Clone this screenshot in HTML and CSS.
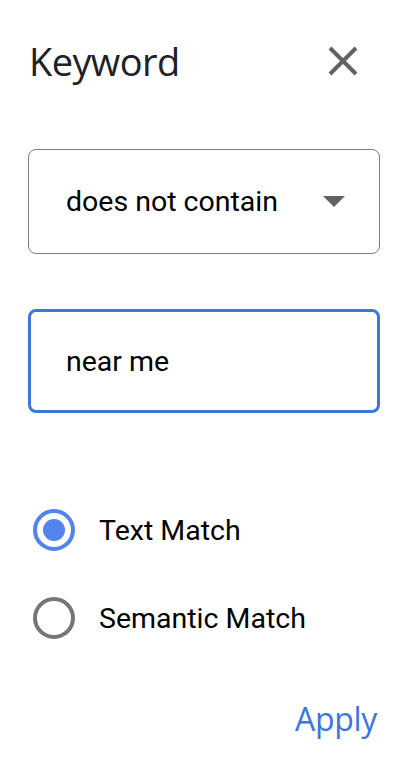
FILE: index.html
```html
<!DOCTYPE html>
<html>
<head>
<meta charset="utf-8">
<link rel="stylesheet" href="styles.css">
</head>
<body>
<div class="panel">
  <div class="header">
    <h1 class="title">Keyword</h1>
    <button class="close" aria-label="Close">
      <svg width="30" height="30" viewBox="0 0 30 30"><path d="M2 2L28 28M28 2L2 28" stroke="#5f6368" stroke-width="4" stroke-linecap="butt" fill="none"/></svg>
    </button>
  </div>
  <div class="select">
    <span class="select-text">does not contain</span>
    <svg class="caret" width="22" height="11" viewBox="0 0 22 11"><path d="M0 0H22L11 11Z" fill="#5f6368"/></svg>
  </div>
  <div class="input">near me</div>
  <div class="radios">
    <label class="radio">
      <span class="dot checked"></span>
      <span class="label">Text Match</span>
    </label>
    <label class="radio">
      <span class="dot"></span>
      <span class="label">Semantic Match</span>
    </label>
  </div>
  <div class="actions">
    <span class="apply">Apply</span>
  </div>
</div>
</body>
</html>
```
FILE: styles.css
```css
html, body {
  margin: 0;
  padding: 0;
  background: #fff;
}
.panel {
  width: 408px;
  box-sizing: border-box;
  padding: 36px 28px 0 28px;
  font-family: Roboto, "Liberation Sans", sans-serif;
  color: #000;
}
.header {
  display: flex;
  align-items: center;
  justify-content: space-between;
  height: 50px;
}
.title {
  margin: 0 0 0 1px;
  font-family: "Open Sans", sans-serif;
  font-weight: 400;
  font-size: 38px;
  line-height: 50px;
  color: #202124;
  letter-spacing: -0.6px;
}
.close {
  border: 0;
  background: none;
  padding: 0;
  margin-right: 22px;
  width: 30px;
  height: 30px;
  display: block;
}
.close svg { display: block; }
.select {
  margin-top: 63px;
  height: 105px;
  box-sizing: border-box;
  border: 1.5px solid #7f7f7f;
  border-radius: 8px;
  display: flex;
  align-items: center;
  justify-content: space-between;
  padding: 0 34px 0 37px;
}
.select-text {
  font-size: 28.5px;
}
.caret { display: block; }
.input {
  margin-top: 55px;
  height: 104px;
  box-sizing: border-box;
  border: 3px solid #3c78d8;
  border-radius: 8px;
  display: flex;
  align-items: center;
  padding: 0 35px;
  font-size: 28.5px;
}
.radios {
  margin-top: 96px;
  display: flex;
  flex-direction: column;
  gap: 46px;
}
.radio {
  display: flex;
  align-items: center;
  gap: 24px;
  height: 42px;
}
.dot {
  width: 42px;
  height: 42px;
  box-sizing: border-box;
  border: 4px solid #767676;
  border-radius: 50%;
  margin-left: 5px;
  position: relative;
  flex: none;
}
.dot.checked {
  border-color: #5383ec;
}
.dot.checked::after {
  content: "";
  position: absolute;
  left: 6px;
  top: 6px;
  width: 22px;
  height: 22px;
  border-radius: 50%;
  background: #5383ec;
}
.label {
  font-size: 28.5px;
}
.actions {
  display: flex;
  justify-content: flex-end;
  margin-top: 60px;
  padding-right: 3px;
}
.apply {
  font-family: "Open Sans", sans-serif;
  font-size: 32px;
  line-height: 40px;
  color: #3a76e0;
  letter-spacing: -0.3px;
}
```
